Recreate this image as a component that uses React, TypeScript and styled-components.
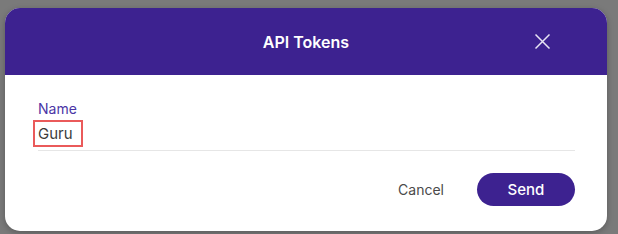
import React, { useState } from 'react';
import styled, { createGlobalStyle } from 'styled-components';

const purple = '#3d2290';

const GlobalStyle = createGlobalStyle`
  html, body {
    margin: 0;
    padding: 0;
    background: #7a7a7a;
    font-family: Inter, "Noto Sans", sans-serif;
  }
`;

const Backdrop = styled.div`
  padding: 8px 11px 3px 5px;
`;

const Dialog = styled.div`
  width: 602px;
  height: 223px;
  background: #ffffff;
  border-radius: 15px;
  overflow: hidden;
  box-shadow: 0 2px 6px rgba(0, 0, 0, 0.25);
  display: flex;
  flex-direction: column;
`;

const Header = styled.div`
  height: 67px;
  background: ${purple};
  display: grid;
  grid-template-columns: 1fr auto 1fr;
  align-items: center;
`;

const Title = styled.h2`
  margin: 0;
  grid-column: 2;
  color: #ffffff;
  font-size: 16px;
  font-weight: 600;
`;

const CloseButton = styled.button`
  justify-self: end;
  margin-right: 52px;
  width: 26px;
  height: 26px;
  padding: 0;
  border: none;
  background: transparent;
  color: #e8e4f4;
  display: flex;
  align-items: center;
  justify-content: center;
  cursor: pointer;
`;

const Body = styled.div`
  padding: 25px 32px 0 33px;
`;

const Label = styled.label`
  display: block;
  color: #4b35a6;
  font-size: 14px;
  line-height: 18px;
`;

const Field = styled.div`
  display: flex;
  align-items: flex-start;
  height: 33px;
  padding-top: 2px;
  box-sizing: border-box;
  border-bottom: 1px solid #e6e6e6;
`;

const Value = styled.span<{ $highlight?: boolean }>`
  display: inline-block;
  margin-left: -5px;
  padding: 2px 8px 2px 3px;
  font-size: 15px;
  line-height: 19px;
  color: #3b3b3b;
  border: 2px solid ${(p) => (p.$highlight ? '#ea5a5a' : 'transparent')};
`;

const Footer = styled.div`
  display: flex;
  justify-content: flex-end;
  align-items: center;
  gap: 21px;
  padding: 22px 32px 0 0;
`;

const TextButton = styled.button`
  border: none;
  background: transparent;
  font-family: inherit;
  font-size: 14px;
  color: #4a4a4a;
  padding: 0 12px;
  height: 33px;
  cursor: pointer;
`;

const PrimaryButton = styled.button`
  border: none;
  background: ${purple};
  color: #ffffff;
  font-family: inherit;
  font-size: 15px;
  font-weight: 500;
  width: 98px;
  height: 33px;
  border-radius: 17px;
  cursor: pointer;
`;

const CloseIcon = () => (
  <svg width="17" height="17" viewBox="0 0 17 17" fill="none" stroke="currentColor" strokeWidth="1.5">
    <path d="M1.5 1.5 L15.5 15.5 M15.5 1.5 L1.5 15.5" />
  </svg>
);

const App = () => {
  const [name] = useState('Guru');

  return (
    <>
      <GlobalStyle />
      <Backdrop>
        <Dialog>
          <Header>
            <Title>API Tokens</Title>
            <CloseButton aria-label="Close">
              <CloseIcon />
            </CloseButton>
          </Header>
          <Body>
            <Label>Name</Label>
            <Field>
              <Value $highlight>{name}</Value>
            </Field>
          </Body>
          <Footer>
            <TextButton>Cancel</TextButton>
            <PrimaryButton>Send</PrimaryButton>
          </Footer>
        </Dialog>
      </Backdrop>
    </>
  );
};

export default App;
